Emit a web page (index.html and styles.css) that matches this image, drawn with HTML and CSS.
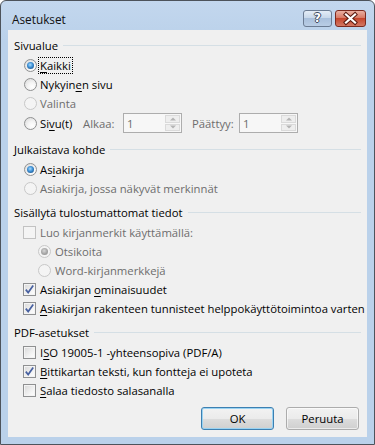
FILE: index.html
```html
<!DOCTYPE html>
<html lang="fi">
<head>
<meta charset="utf-8">
<title>Asetukset</title>
<link rel="stylesheet" href="styles.css">
</head>
<body>
<div class="window">
  <div class="titlebar">
    <span class="title">Asetukset</span>
    <div class="caption-btns">
      <div class="cap help"><span class="q">?</span></div>
      <div class="cap close">
        <svg width="31" height="17" viewBox="0 0 31 17">
          <path d="M11 4.5 L20 12.5 M20 4.5 L11 12.5" stroke="#5a1a10" stroke-width="4.2" stroke-linecap="square" fill="none"/>
          <path d="M11 4.5 L20 12.5 M20 4.5 L11 12.5" stroke="#ffffff" stroke-width="2.2" stroke-linecap="square" fill="none"/>
        </svg>
      </div>
    </div>
  </div>
  <div class="client">
    <div class="heading"><span>Sivualue</span><i class="rule"></i></div>
    <div class="item"><span class="radio on"></span><span class="label focus"><u>K</u>aikki</span></div>
    <div class="item"><span class="radio"></span><span class="label">Nykyin<u>e</u>n sivu</span></div>
    <div class="item dis"><span class="radio"></span><span class="label">Valinta</span></div>
    <div class="item pages">
      <span class="radio"></span><span class="label pagelabel">Si<u>v</u>u(t)</span>
      <span class="fieldlabel dis-text alkaa">Alkaa:</span>
      <span class="spin"><span class="val">1</span><span class="arrows"><i class="up"></i><i class="down"></i></span></span>
      <span class="fieldlabel dis-text paattyy">Päättyy:</span>
      <span class="spin"><span class="val">1</span><span class="arrows"><i class="up"></i><i class="down"></i></span></span>
    </div>

    <div class="heading gap5"><span>Julkaistava kohde</span><i class="rule"></i></div>
    <div class="item"><span class="radio on"></span><span class="label">As<u>i</u>akirja</span></div>
    <div class="item dis"><span class="radio"></span><span class="label">Asiakirja, jossa näkyvät merkinnät</span></div>

    <div class="heading gap3"><span>Sisällytä tulostumattomat tiedot</span><i class="rule"></i></div>
    <div class="item chk dis"><span class="check"></span><span class="label">Luo kirjanmerkit käyttämällä:</span></div>
    <div class="item sub dis"><span class="radio on"></span><span class="label">Otsikoita</span></div>
    <div class="item sub dis"><span class="radio"></span><span class="label">Word-kirjanmerkkejä</span></div>
    <div class="item chk"><span class="check on"><svg width="11" height="11" viewBox="0 0 11 11"><path d="M1.8 5.6 L4.2 8.6 L9.2 1.6" stroke="#4760a0" stroke-width="1.7" fill="none"/></svg></span><span class="label">Asiakirjan <u>o</u>minaisuudet</span></div>
    <div class="item chk"><span class="check on"><svg width="11" height="11" viewBox="0 0 11 11"><path d="M1.8 5.6 L4.2 8.6 L9.2 1.6" stroke="#4760a0" stroke-width="1.7" fill="none"/></svg></span><span class="label"><u>A</u>siakirjan rakenteen tunnisteet helppokäyttötoimintoa varten</span></div>

    <div class="heading gap3"><span>PDF-asetukset</span><i class="rule"></i></div>
    <div class="item chk"><span class="check"></span><span class="label">I<u>S</u>O 19005-1 -yhteensopiva (PDF/A)</span></div>
    <div class="item chk"><span class="check on"><svg width="11" height="11" viewBox="0 0 11 11"><path d="M1.8 5.6 L4.2 8.6 L9.2 1.6" stroke="#4760a0" stroke-width="1.7" fill="none"/></svg></span><span class="label"><u>B</u>ittikartan teksti, kun fontteja ei upoteta</span></div>
    <div class="item chk"><span class="check"></span><span class="label"><u>S</u>alaa tiedosto salasanalla</span></div>

    <div class="buttons">
      <div class="btn default">OK</div>
      <div class="btn">Peruuta</div>
    </div>
  </div>
</div>
</body>
</html>
```

FILE: styles.css
```css
html, body {
  margin: 0;
  padding: 0;
  background: #ffffff;
}

body {
  font-family: "Open Sans", "Noto Sans", sans-serif;
  font-size: 11.3px;
  color: #000;
}

.window {
  box-sizing: border-box;
  width: 375px;
  height: 445px;
  border: 1px solid #4d535b;
  border-radius: 6px 6px 0 0;
  background: linear-gradient(#c3d7ee, #bad1ea 40px, #bad1ea);
  padding: 0 7px 7px 7px;
  display: flex;
  flex-direction: column;
}

.titlebar {
  height: 29px;
  margin: 0 -7px;
  padding: 0 8px 0 11px;
  display: flex;
  justify-content: space-between;
  align-items: flex-start;
}

.title {
  margin-top: 10px;
  line-height: 16px;
  font-size: 11.8px;
  color: #111;
}

.caption-btns {
  display: flex;
  gap: 3px;
  margin-top: 9px;
}

.cap {
  box-sizing: border-box;
  height: 17px;
  border-radius: 3px;
  display: flex;
  align-items: center;
  justify-content: center;
}

.help {
  width: 29px;
  border: 1px solid #6b7c93;
  background: linear-gradient(#e4edf7, #c8d8ea 45%, #a9c0dc 50%, #b9cde5);
}

.q {
  font-family: "DejaVu Sans", sans-serif;
  font-weight: bold;
  font-size: 12px;
  line-height: 15px;
  color: #ffffff;
  text-shadow: 1px 0 0 #3c4b60, -1px 0 0 #3c4b60, 0 1px 0 #3c4b60, 0 -1px 0 #3c4b60;
}

.close {
  width: 31px;
  border: 1px solid #7c2a1f;
  background: linear-gradient(#eab0a2, #d87a66 45%, #c5462d 50%, #d37864);
}

.close svg {
  display: block;
  margin: -1px;
}

.client {
  box-sizing: border-box;
  height: 407px;
  background: #f0f0f0;
  padding: 4px 6px 0 6px;
  display: flex;
  flex-direction: column;
}

.heading {
  height: 22px;
  display: flex;
  align-items: center;
  gap: 5px;
  white-space: nowrap;
}

.heading .rule {
  flex: 1;
  height: 1px;
  background: #d5dfe5;
  margin-top: 1px;
}

.gap5 { margin-top: 5px; }
.gap3 { margin-top: 3px; }

.item {
  height: 19px;
  display: flex;
  align-items: center;
  padding-left: 10px;
  white-space: nowrap;
}

.item.chk { padding-left: 9px; }
.item.sub { padding-left: 24px; }

.item .label {
  margin-left: 3px;
  line-height: 15px;
}

.item.chk .label { margin-left: 4px; }
.item.sub .label { margin-left: 4px; }

.item.dis .label,
.dis-text {
  color: #6d6d6d;
}

.label.focus {
  outline: 1px dotted #000;
  outline-offset: 0;
  padding: 0 1px;
  margin-left: 2px;
  line-height: 15px;
}

u {
  text-underline-offset: 2px;
}

.radio {
  box-sizing: border-box;
  width: 13px;
  height: 13px;
  border-radius: 50%;
  border: 1px solid #8f9091;
  background: radial-gradient(circle at 65% 70%, #ffffff 0, #f4f4f4 40%, #d6d6d6 100%);
  display: flex;
  align-items: center;
  justify-content: center;
  flex: none;
}

.radio.on::after {
  content: "";
  width: 7px;
  height: 7px;
  border-radius: 50%;
  background: radial-gradient(circle at 45% 40%, #a8dcff 0, #3d8fd4 45%, #0e3d6e 100%);
}

.item.dis .radio {
  border-color: #c8c8c8;
  background: #f4f4f4;
}

.item.dis .radio.on::after {
  background: radial-gradient(circle at 45% 40%, #d8d8d8 0, #a4a4a4 55%, #8a8a8a 100%);
}

.check {
  box-sizing: border-box;
  width: 13px;
  height: 13px;
  border: 1px solid #8f9091;
  background: linear-gradient(135deg, #d8d8d8, #f6f6f6 70%, #ffffff);
  box-shadow: inset 0 0 0 1px #f4f4f4;
  display: flex;
  align-items: center;
  justify-content: center;
  flex: none;
}

.check svg { display: block; }

.item.dis .check {
  border-color: #c2c2c2;
  background: #f4f4f4;
  box-shadow: none;
}

.pages {
  height: 20px;
}

.pages .pagelabel {
  width: 43px;
}

.fieldlabel {
  line-height: 15px;
}

.alkaa { width: 40px; }
.paattyy { width: 47px; margin-left: 10px; }

.spin {
  box-sizing: border-box;
  width: 59px;
  height: 20px;
  border: 1px solid #adadad;
  background: #f7f7f7;
  display: flex;
  align-items: stretch;
}

.spin .val {
  flex: 1;
  color: #6d6d6d;
  padding-left: 3px;
  line-height: 19px;
}

.spin .arrows {
  width: 15px;
  margin: 1px;
  display: flex;
  flex-direction: column;
  gap: 1px;
}

.spin .arrows i {
  flex: 1;
  background: #eeeeee;
  border: 1px solid #dadada;
  position: relative;
}

.spin .arrows i::after {
  content: "";
  position: absolute;
  left: 50%;
  top: 50%;
  width: 0;
  height: 0;
  border-left: 3px solid transparent;
  border-right: 3px solid transparent;
  transform: translate(-50%, -50%);
}

.spin .arrows .up::after { border-bottom: 3px solid #b4b4b4; }
.spin .arrows .down::after { border-top: 3px solid #b4b4b4; }

.buttons {
  margin-top: 7px;
  display: flex;
  justify-content: flex-end;
  gap: 12px;
  padding-right: 2px;
}

.btn {
  box-sizing: border-box;
  width: 73px;
  height: 23px;
  border: 1px solid #acacac;
  border-radius: 3px;
  background: linear-gradient(#f2f2f2, #ebebeb 50%, #dddddd 51%, #cfcfcf);
  box-shadow: inset 0 0 0 1px rgba(255,255,255,0.6);
  display: flex;
  align-items: center;
  justify-content: center;
  line-height: 15px;
}

.btn.default {
  border-color: #3c7fb1;
  box-shadow: inset 0 0 0 1px #9ad3f2;
}
```
